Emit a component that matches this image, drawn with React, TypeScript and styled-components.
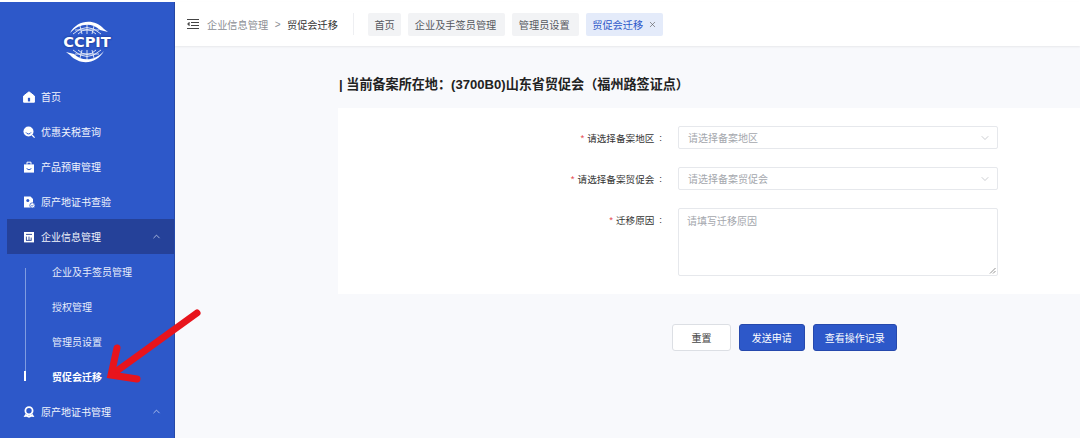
import { FC, ReactNode } from 'react'
import styled, { createGlobalStyle } from 'styled-components'
import { ChevronDown, ChevronUp, X } from 'lucide-react'

const GlobalStyle = createGlobalStyle`
  html, body {
    margin: 0;
    padding: 0;
    height: 100%;
    overflow: hidden;
    background: #fff;
  }
  * {
    box-sizing: border-box;
  }
  body, button, input, textarea {
    font-family: 'Liberation Sans', 'Noto Sans CJK SC', sans-serif;
  }
`

const Page = styled.div`
  position: relative;
  width: 1080px;
  height: 438px;
  padding-top: 2px;
  display: flex;
  overflow: hidden;
  background: #fff;
`

const Sidebar = styled.aside`
  width: 175px;
  flex: none;
  background: #2d58c9;
  border-right: 1px solid #2649a8;
  display: flex;
  flex-direction: column;
`

const LogoBox = styled.div`
  height: 77px;
  padding-top: 2px;
  display: flex;
  align-items: center;
  justify-content: center;
  position: relative;
`

const LogoText = styled.span`
  position: absolute;
  left: 0;
  right: 0;
  top: 32px;
  text-align: center;
  color: #fff;
  font-family: 'DejaVu Sans', sans-serif;
  font-weight: 700;
  font-size: 14.6px;
  line-height: 16px;
  text-shadow: 0 0 2px #1d3a96, 0 0 2px #1d3a96;
`

const MenuItem = styled.div<{ $active?: boolean }>`
  height: 35px;
  margin-left: 7px;
  padding: 0 12px 0 16px;
  display: flex;
  align-items: center;
  gap: 6px;
  color: #f1f4fc;
  font-size: 10px;
  background: ${(p) => (p.$active ? '#254199' : 'transparent')};
  svg.menu-icon {
    flex: none;
    width: 12px;
    height: 12px;
  }
  svg.arrow {
    margin-left: auto;
    color: #dfe6f8;
  }
`

const SubMenu = styled.div`
  position: relative;
`

const SubLine = styled.i`
  position: absolute;
  left: 25px;
  top: 14px;
  height: 108px;
  width: 1px;
  background: #7f9ce0;
`

const SubMarker = styled.i`
  position: absolute;
  left: 24px;
  top: 117px;
  height: 10px;
  width: 2px;
  background: #fff;
`

const SubItem = styled.div<{ $active?: boolean }>`
  height: 35px;
  padding-left: 52px;
  display: flex;
  align-items: center;
  color: ${(p) => (p.$active ? '#fff' : '#e6ecfa')};
  font-size: 10px;
  font-weight: ${(p) => (p.$active ? 700 : 400)};
`

const Main = styled.main`
  flex: 1;
  display: flex;
  flex-direction: column;
  min-width: 0;
  background: #f8f9fc;
`

const Header = styled.header`
  height: 44px;
  flex: none;
  background: #fff;
  box-shadow: 0 1px 2px rgba(0, 0, 0, 0.07);
  display: flex;
  align-items: center;
  padding-left: 12px;
`

const Crumb = styled.span<{ $current?: boolean }>`
  font-size: 10.2px;
  color: ${(p) => (p.$current ? '#333' : '#8b8e94')};
  margin-left: ${(p) => (p.$current ? 0 : 8)}px;
`

const CrumbSep = styled.span`
  font-size: 10px;
  color: #8b8e94;
  margin: 0 6.5px;
`

const Divider = styled.i`
  width: 1px;
  height: 22px;
  background: #eeeff2;
  margin: 0 14px 0 15px;
`

const Tabs = styled.div`
  display: flex;
  gap: 7px;
`

const Tab = styled.div<{ $active?: boolean; $short?: boolean }>`
  height: 23px;
  padding: 0 ${(p) => (p.$active ? 5.5 : p.$short ? 6.5 : 9)}px 0 6.5px;
  display: flex;
  align-items: center;
  gap: 5px;
  border-radius: 2px;
  font-size: 10.2px;
  background: ${(p) => (p.$active ? '#e4ebfa' : '#f2f3f5')};
  color: ${(p) => (p.$active ? '#2d58c9' : '#55585e')};
  svg {
    color: #555;
  }
`

const Title = styled.h1`
  margin: 0;
  height: 62px;
  padding: 29px 0 0 164px;
  font-size: 13.1px;
  line-height: 20px;
  font-weight: 700;
  color: #222;
`

const FormCard = styled.section`
  margin-left: 163px;
  height: 186px;
  background: #fff;
  padding-top: 18px;
  display: flex;
  flex-direction: column;
  gap: 18px;
`

const Field = styled.div`
  display: flex;
  align-items: flex-start;
`

const Label = styled.label`
  width: 326px;
  flex: none;
  height: 23px;
  display: flex;
  align-items: center;
  justify-content: flex-end;
  font-size: 9.6px;
  color: #333;
  em {
    color: #e5484d;
    font-style: normal;
    margin-right: 3px;
  }
`

const Colon = styled.span`
  margin: 0 2px 0 5px;
`

const Control = styled.div<{ $tall?: boolean }>`
  margin-left: 14px;
  width: 320px;
  height: ${(p) => (p.$tall ? '68px' : '23px')};
  border: 1px solid #e6e8ec;
  border-radius: 2px;
  background: #fff;
  padding: ${(p) => (p.$tall ? '4px 8px 0 8px' : '0 6px 0 9px')};
  display: flex;
  align-items: ${(p) => (p.$tall ? 'flex-start' : 'center')};
  justify-content: space-between;
  font-size: 10px;
  color: #a4a7ad;
  position: relative;
  svg {
    color: #a8abb1;
  }
`

const Resize = styled.svg`
  position: absolute;
  right: 1px;
  bottom: 1px;
`

const Actions = styled.div`
  margin: 30px 0 0 497px;
  display: flex;
  gap: 8px;
`

const Btn = styled.button<{ $primary?: boolean; $w: number }>`
  width: ${(p) => p.$w}px;
  height: 27px;
  padding: 0;
  border-radius: 3px;
  font-size: 10px;
  border: 1px solid ${(p) => (p.$primary ? '#2649ad' : '#dcdfe4')};
  background: ${(p) => (p.$primary ? '#2d58c9' : '#fff')};
  color: ${(p) => (p.$primary ? '#fff' : '#444')};
`

const ArrowLayer = styled.svg`
  position: absolute;
  left: 100px;
  top: 300px;
`

const Logo = () => (
  <svg width="50" height="46" viewBox="0 0 50 46" fill="none" stroke="#fff">
    <g strokeWidth="0.9" opacity="0.9">
      <path d="M11 15 Q25 2 39 15" />
      <path d="M16 15 Q25 6 34 15" />
      <path d="M25 5V15M18 7L20 15M32 7L30 15M13 11H37" />
      <path d="M11 31 Q25 44 39 31" />
      <path d="M16 31 Q25 40 34 31" />
      <path d="M25 31V41M18 39L20 31M32 39L30 31M13 35H37" />
    </g>
    <path d="M8 14 C15 1 32 -1 42 10 L46 13 L38 11 C30 3 17 4 8 14Z" fill="#fff" stroke="none" />
    <path d="M42 32 C35 45 18 47 8 36 L4 33 L12 35 C20 43 33 42 42 32Z" fill="#fff" stroke="none" />
  </svg>
)

const IconHome = () => (
  <svg className="menu-icon" viewBox="0 0 12 12">
    <path d="M6 .8 11.4 5v6.2H.6V5Z" fill="#fff" stroke="#fff" strokeLinejoin="round" />
    <rect x="4.9" y="6.8" width="2.2" height="3.6" fill="#2d58c9" />
  </svg>
)

const IconSearch = () => (
  <svg className="menu-icon" viewBox="0 0 12 12">
    <circle cx="5.5" cy="5.5" r="5" fill="#fff" />
    <path d="M3 6.4A2.8 2.8 0 0 0 8 6.4" stroke="#2d58c9" strokeWidth="1" fill="none" />
    <path d="M9 9 11.6 11.6" stroke="#fff" strokeWidth="1.2" />
  </svg>
)

const IconBag = () => (
  <svg className="menu-icon" viewBox="0 0 12 12">
    <path d="M1 3.4H11V11.6H1Z" fill="#fff" />
    <path d="M4 3.6V1.2H8V3.6" stroke="#fff" fill="none" />
    <path d="M3.6 7.6Q6 10 8.4 7.6" stroke="#2d58c9" fill="none" />
  </svg>
)

const IconDoc = () => (
  <svg className="menu-icon" viewBox="0 0 12 12">
    <path d="M1 .6H7.5L10 3V11.4H1Z" fill="#fff" />
    <circle cx="4.8" cy="4.6" r="1.5" fill="#2d58c9" />
    <circle cx="9.4" cy="9.4" r="2.6" fill="#fff" stroke="#2d58c9" strokeWidth="0.8" />
    <path d="M8.2 9.4 9.2 10.3 10.6 8.6" stroke="#2d58c9" strokeWidth="0.8" fill="none" />
  </svg>
)

const IconCompany = () => (
  <svg className="menu-icon" viewBox="0 0 12 12">
    <path d="M1 1H11V11.4H1Z" fill="#fff" />
    <path d="M3 3.4H9M3.4 5.6V9.2M6 5.6V9.2M3 9.4H8.6M8.2 6.6V9.2" stroke="#254199" strokeWidth="0.9" fill="none" />
  </svg>
)

const IconBadge = () => (
  <svg className="menu-icon" viewBox="0 0 12 12">
    <circle cx="6" cy="4.8" r="3.6" fill="none" stroke="#fff" strokeWidth="1.8" />
    <path d="M2.4 8 .6 11 3.6 10.8 6 11.8 8.4 10.8 11.4 11 9.6 8 6 9.6Z" fill="#fff" />
  </svg>
)

const ToggleIcon = () => (
  <svg width="12" height="10" viewBox="0 0 12 10" stroke="#444" strokeWidth="1" fill="none">
    <path d="M0 .5H12M4 3.5H12M4 6.5H12M0 9.5H12" />
    <path d="M2.4 3 .4 5 2.4 7Z" fill="#444" strokeWidth="0.4" />
  </svg>
)

const Item: FC<{ icon: ReactNode; label: string; active?: boolean; arrow?: boolean }> = ({
  icon,
  label,
  active,
  arrow,
}) => (
  <MenuItem $active={active}>
    {icon}
    <span>{label}</span>
    {arrow && <ChevronUp className="arrow" size={11} strokeWidth={1.5} />}
  </MenuItem>
)

export default function App() {
  return (
    <Page>
      <GlobalStyle />
      <Sidebar>
        <LogoBox>
          <Logo />
          <LogoText>CCPIT</LogoText>
        </LogoBox>
        <Item icon={<IconHome />} label="首页" />
        <Item icon={<IconSearch />} label="优惠关税查询" />
        <Item icon={<IconBag />} label="产品预审管理" />
        <Item icon={<IconDoc />} label="原产地证书查验" />
        <Item icon={<IconCompany />} label="企业信息管理" active arrow />
        <SubMenu>
          <SubLine />
          <SubMarker />
          <SubItem>企业及手签员管理</SubItem>
          <SubItem>授权管理</SubItem>
          <SubItem>管理员设置</SubItem>
          <SubItem $active>贸促会迁移</SubItem>
        </SubMenu>
        <Item icon={<IconBadge />} label="原产地证书管理" arrow />
      </Sidebar>

      <Main>
        <Header>
          <ToggleIcon />
          <Crumb>企业信息管理</Crumb>
          <CrumbSep>&gt;</CrumbSep>
          <Crumb $current>贸促会迁移</Crumb>
          <Divider />
          <Tabs>
            <Tab $short>首页</Tab>
            <Tab>企业及手签员管理</Tab>
            <Tab>管理员设置</Tab>
            <Tab $active>
              贸促会迁移
              <X size={9} strokeWidth={1.6} />
            </Tab>
          </Tabs>
        </Header>

        <Title>| 当前备案所在地：(3700B0)山东省贸促会（福州路签证点）</Title>

        <FormCard>
          <Field>
            <Label>
              <em>*</em>请选择备案地区<Colon>:</Colon>
            </Label>
            <Control>
              请选择备案地区
              <ChevronDown size={12} strokeWidth={1.2} />
            </Control>
          </Field>
          <Field>
            <Label>
              <em>*</em>请选择备案贸促会<Colon>:</Colon>
            </Label>
            <Control>
              请选择备案贸促会
              <ChevronDown size={12} strokeWidth={1.2} />
            </Control>
          </Field>
          <Field>
            <Label>
              <em>*</em>迁移原因<Colon>:</Colon>
            </Label>
            <Control $tall>
              请填写迁移原因
              <Resize width="7" height="7" viewBox="0 0 7 7" stroke="#777" strokeWidth="0.8">
                <path d="M1 6.5 6.5 1M4 6.5 6.5 4" />
              </Resize>
            </Control>
          </Field>
        </FormCard>

        <Actions>
          <Btn $w={59}>重置</Btn>
          <Btn $primary $w={65.5}>
            发送申请
          </Btn>
          <Btn $primary $w={84.5}>
            查看操作记录
          </Btn>
        </Actions>
      </Main>

      <ArrowLayer width="110" height="90" viewBox="0 0 110 90" fill="none">
        <path d="M97 13 L14 73" stroke="#e8141c" strokeWidth="7" strokeLinecap="round" />
        <path d="M17 48 L11 75 L37 79" stroke="#e8141c" strokeWidth="7" strokeLinecap="round" strokeLinejoin="miter" />
      </ArrowLayer>
    </Page>
  )
}
